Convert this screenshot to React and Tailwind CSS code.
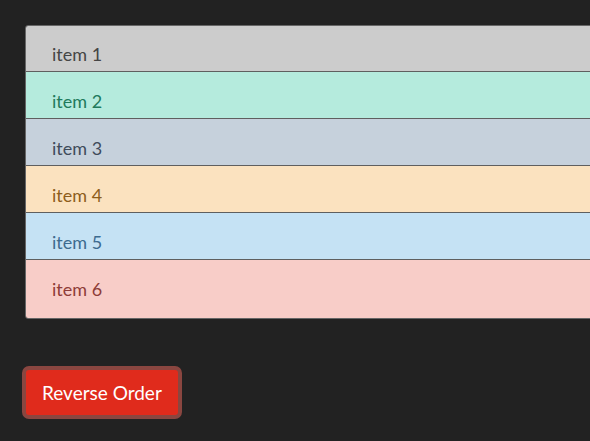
import { useState } from "react";

const initialItems = [
  { id: 1, bg: "bg-[#cccccc]", text: "text-[#454545]" },
  { id: 2, bg: "bg-[#b5ebdd]", text: "text-[#217a5c]" },
  { id: 3, bg: "bg-[#c6d1dc]", text: "text-[#3f4b5b]" },
  { id: 4, bg: "bg-[#fbe2bf]", text: "text-[#8d5d1c]" },
  { id: 5, bg: "bg-[#c5e2f4]", text: "text-[#3d6b8f]" },
  { id: 6, bg: "bg-[#f8cdc8]", text: "text-[#8e3c38]" },
];

function App() {
  const [items, setItems] = useState(initialItems);

  return (
    <div className="min-h-screen w-full overflow-hidden bg-[#222222] pl-[22px] pt-[25px] font-['Lato','Liberation_Sans',sans-serif]">
      <ul className="ml-[3px] w-[600px] overflow-hidden rounded-[3px] border border-[#666666]">
        {items.map((item, index) => {
          const last = index === items.length - 1;
          const height = index === 0 ? "h-[46px] pt-[16px]" : last ? "h-[58px] pt-[17px]" : "h-[47px] pt-[17px]";
          return (
            <li
              key={item.id}
              className={`${item.bg} ${item.text} ${height} ${last ? "" : "border-b border-[#5f5f5f]"} pl-[26px] text-[18px] leading-6`}
            >
              item {item.id}
            </li>
          );
        })}
      </ul>
      <button
        type="button"
        className="mt-[47px] h-[53px] rounded-[7px] border-4 border-[#8a4640] bg-[#e02b1c] px-4 text-[19px] leading-6 text-white"
        onClick={() => setItems([...items].reverse())}
      >
        Reverse Order
      </button>
    </div>
  );
}

export default App;
